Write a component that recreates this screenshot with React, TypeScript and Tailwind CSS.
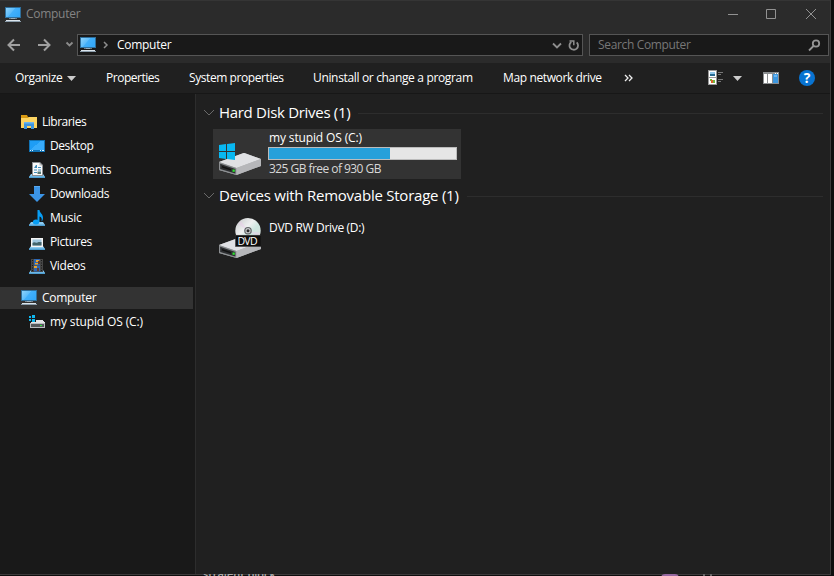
import type { ReactNode } from "react";

function Monitor({ className = "" }: { className?: string }) {
  return (
    <svg width="16" height="16" viewBox="0 0 16 16" className={`shrink-0 ${className}`} shapeRendering="crispEdges">
      <defs>
        <linearGradient id="scr" x1="0" y1="0" x2="1" y2="0.6">
          <stop offset="0" stopColor="#8fd3fb" />
          <stop offset="0.5" stopColor="#5cbcfb" />
          <stop offset="0.52" stopColor="#42b0fb" />
          <stop offset="1" stopColor="#35a8f8" />
        </linearGradient>
      </defs>
      <rect width="16" height="11" fill="#2f6f9c" />
      <rect x="1" y="1" width="14" height="9" fill="url(#scr)" />
      <rect x="6" y="11" width="4" height="1" fill="#7c93a3" />
      <rect x="4" y="11" width="8" height="1" fill="#a9bccb" opacity=".6" />
      <rect x="1" y="13" width="14" height="1" fill="#dce5ec" />
      <rect y="14" width="16" height="1" fill="#8b9dab" />
    </svg>
  );
}

function LibraryIcon() {
  return (
    <svg width="16" height="16" viewBox="0 0 16 16" className="shrink-0">
      <path d="M0 1h6l1 2h9v11H0z" fill="#d99a12" />
      <path d="M0 4h7l1-1h8v11H0z" fill="#fcd462" />
      <path d="M3 15V8h10v7h-3v-3H6v3z" fill="#3e95df" />
      <path d="M3 8h10v1.500H3z" fill="#6db6ee" />
    </svg>
  );
}

function DesktopIcon() {
  return (
    <svg width="16" height="16" viewBox="0 0 16 16" className="shrink-0" shapeRendering="crispEdges">
      <rect y="2" width="16" height="12" fill="#1173b5" />
      <rect x="1" y="3" width="14" height="9" fill="#1e9df5" />
      <path d="M1 12L12 3h3v9z" fill="#38acfb" />
      <path d="M1 12h1v1H1zM3 12h1v1H3zM11 12h1v1h-1zM13 12h2v1h-2z" fill="#d8f0ff" />
    </svg>
  );
}

function Tray() {
  return (
    <g>
      <path d="M2 12h12l2 3H0z" fill="#8bcbf2" />
      <path d="M0 14.500h16v1.500H0z" fill="#4f9fd2" />
    </g>
  );
}

function DocumentsIcon() {
  return (
    <svg width="16" height="16" viewBox="0 0 16 16" className="shrink-0">
      <Tray />
      <path d="M3 0h8l3 3v11H3z" fill="#8c9093" />
      <path d="M4 1h6.500L13 3.500V13H4z" fill="#fafafa" />
      <path d="M10.500 1v2.500H13" fill="#b9bcbe" />
      <path d="M5 6l2-3h1v3zM9 5h3v1H9zM5 7.500h3v1H5zM9 7.500h3v1H9zM5 10h3v1H5z" fill="#438fbb" />
      <path d="M8.500 9.500H12V12H8.500z" fill="#577b78" />
    </svg>
  );
}

function DownloadsIcon() {
  return (
    <svg width="16" height="16" viewBox="0 0 16 16" className="shrink-0">
      <path d="M5 0h6v8h5l-8 8-8-8h5z" fill="#3b94e6" />
      <path d="M5 0h6v1H5z" fill="#58a9ef" />
    </svg>
  );
}

function MusicIcon() {
  return (
    <svg width="16" height="16" viewBox="0 0 16 16" className="shrink-0">
      <Tray />
      <ellipse cx="7" cy="12" rx="3.200" ry="2.500" fill="#079ef5" />
      <path d="M8.500 12V0h2c0 3 4 4 3.500 8.500-.2 1.500-.8 2.500-1.500 3 .8-3-.2-4.500-2-5V12z" fill="#079ef5" />
    </svg>
  );
}

function PicturesIcon() {
  return (
    <svg width="16" height="16" viewBox="0 0 16 16" className="shrink-0">
      <Tray />
      <path d="M2 4h12v9H2z" fill="#f5f5f5" />
      <path d="M3.500 5.500h9v6h-9z" fill="#9fc6df" />
      <path d="M3.500 9c2-2 3 .5 5-.5s3 0 4-.5v3.500h-9z" fill="#42636b" />
    </svg>
  );
}

function VideosIcon() {
  return (
    <svg width="16" height="16" viewBox="0 0 16 16" className="shrink-0">
      <Tray />
      <path d="M2 1h12v13H2z" fill="#464646" />
      <path d="M3 2h1v1H3zM3 4.500h1v1H3zM3 7h1v1H3zM3 9.500h1v1H3zM3 12h1v1H3zM12 2h1v1h-1zM12 4.500h1v1h-1zM12 7h1v1h-1zM12 9.500h1v1h-1zM12 12h1v1h-1z" fill="#191919" />
      <path d="M5 1h6v6H5zM5 7.500h6v6H5z" fill="#2c67b5" />
      <path d="M7 2h3v2H7zM6 5h3v1.500H6zM5 8h3v2H5z" fill="#e6a32e" />
      <path d="M9 3h2v3H9zM8 10h2v3H8z" fill="#643b26" />
    </svg>
  );
}

function SmallDriveIcon() {
  return (
    <svg width="16" height="16" viewBox="0 0 16 16" className="shrink-0" shapeRendering="crispEdges">
      <path d="M0 2h2v2H0zM3 1h3v3H3zM0 5h2v2H0zM3 5h3v3H3z" fill="#10b8ef" />
      <path d="M7 6h7l2 3H1l2-1h4z" fill="#e2e3e5" />
      <path d="M1 9h15v5H1z" fill="#b9bcc0" />
      <path d="M2 10h13v3H2z" fill="#55585b" />
      <path d="M11 11h2v1h-2z" fill="#32e43f" />
    </svg>
  );
}

function DriveBody() {
  return (
    <g>
      <path d="M0 26L24 17.300q1-.4 2 0L42 23v7L17.500 39 0 34z" fill="#aeb0b2" />
      <path d="M0 26L24 17.300q1-.4 2 0L42 23 17.500 32z" fill="#e0e1e4" />
      <path d="M0 26l17.500 6v7L0 34z" fill="#8b8e91" />
      <path d="M1.200 27.800L16.300 33v4.500L1.200 33z" fill="#2c2e30" />
      <path d="M3 30l9 3v1.500L3 31.500z" fill="#111" />
      <path d="M17.500 32L42 23v7l-24.500 9z" fill="#b6b7ba" />
      <path d="M13.500 33.500h2.300v2.300h-2.300z" fill="#2fe02f" />
    </g>
  );
}

function WindowsDrive() {
  return (
    <svg width="42" height="42" viewBox="0 0 42 42" className="shrink-0">
      <DriveBody />
      <path d="M0 9l7-1v7H0zM8 7.900L16 7v8H8zM0 16h7v7l-7-1zM8 16h8v8l-8-1z" fill="#08b8f2" />
    </svg>
  );
}

function DvdDrive() {
  return (
    <svg width="42" height="42" viewBox="0 0 42 42" className="shrink-0">
      <defs>
        <linearGradient id="disc" x1="0" y1="0" x2="1" y2="1">
          <stop offset="0" stopColor="#c4c7c8" />
          <stop offset=".4" stopColor="#eef0f0" />
          <stop offset=".6" stopColor="#cce6df" />
          <stop offset="1" stopColor="#dadada" />
        </linearGradient>
      </defs>
      <g transform="translate(0 2)"><DriveBody /></g>
      <circle cx="29" cy="13.700" r="12.700" fill="url(#disc)" />
      <path d="M29 13.700L19 7l3-3zM29 13.700l10 6 2-4z" fill="#e9c9e9" opacity=".45" />
      <circle cx="29" cy="13.700" r="3.800" fill="#606466" />
      <circle cx="29" cy="13.700" r="2.600" fill="#c9cccd" />
      <circle cx="29" cy="13.700" r="1.500" fill="#292929" />
      <rect x="16.500" y="18.200" width="25.500" height="11.300" fill="#0d0d0d" stroke="#333" strokeWidth=".5" />
      <text x="18.500" y="27.800" fontSize="10.500" textLength="20" fill="#fff" fontFamily="Open Sans, sans-serif">DVD</text>
    </svg>
  );
}

function Chevron({ className = "" }: { className?: string }) {
  return (
    <svg width="12" height="8" viewBox="0 0 12 8" className={`shrink-0 ${className}`} fill="none" stroke="currentColor">
      <path d="M1 1l5 5 5-5" />
    </svg>
  );
}

function NavRow({ icon, label, child, spacing }: { icon: ReactNode; label: string; child?: boolean; spacing: string }) {
  return (
    <div className={`flex h-6 items-center gap-[5px] ${child ? "pl-[29px]" : "pl-[21px]"}`}>
      {icon}
      <span className={spacing}>{label}</span>
    </div>
  );
}

function Group({ title, spacing }: { title: string; spacing: string }) {
  return (
    <div className="flex h-6 items-center pr-[7px] pl-[7px] text-[15px] text-white">
      <Chevron className="mr-[4px] text-[#6a6a6a]" />
      <span className={`pb-[2px] ${spacing}`}>{title}</span>
      <div className="ml-[8px] h-px flex-1 bg-[#2d2d2d]" />
    </div>
  );
}

export default function App() {
  return (
    <div className="relative h-[576px] w-[834px] overflow-hidden bg-[#0e0e0e] font-['Open_Sans',sans-serif] text-[12px] leading-4 whitespace-nowrap text-white">
      <div className="flex h-[575px] w-[831px] flex-col border-r border-b border-[#3c3a3b] bg-[#2b2b2b]">
        <header className="flex h-[34px] shrink-0 items-start border-t border-[#353535] pl-[5px]">
          <Monitor className="mt-[6px]" />
          <span className="mt-[5px] ml-[5px] tracking-[-0.28px] text-[#848484]">Computer</span>
          <svg width="106" height="28" viewBox="0 0 106 28" className="ml-auto" fill="none" stroke="#929292">
            <path d="M4 13.500h10M42.500 8.500h9v9h-9zM82 8l10 10M92 8L82 18" />
          </svg>
        </header>

        <div className="flex h-[29px] shrink-0 items-start">
          <svg width="77" height="22" viewBox="0 0 77 22" fill="none" stroke="#a0a0a0" strokeWidth="2" className="shrink-0">
            <path d="M20 11H9M14 5.500L8.500 11l5.500 5.500M38 11h11M44 5.500l5.500 5.500-5.500 5.500" />
            <path d="M66.500 8.500l3 3 3-3" strokeWidth="1.800" stroke="#8c8c8c" />
          </svg>
          <div className="flex h-[22px] w-[506px] shrink-0 items-center border border-[#555] bg-[#191919] pl-[2px]">
            <Monitor />
            <svg width="6" height="10" viewBox="0 0 6 10" fill="none" stroke="#8c8c8c" strokeWidth="1.500" className="ml-[7px]">
              <path d="M1 2l3 3-3 3" />
            </svg>
            <span className="ml-[8px] tracking-[-0.28px]">Computer</span>
            <svg width="32" height="20" viewBox="0 0 32 20" fill="none" stroke="#8e8e8e" strokeWidth="1.800" className="ml-auto">
              <path d="M3 8.500l4 4 4-4" />
              <path d="M21.300 6.900A4.300 4.300 0 1 0 26.700 7.300" />
              <path d="M19.500 5.900h4.300v4.300" strokeWidth="1.500" />
            </svg>
          </div>
          <div className="ml-[6px] flex h-[22px] w-[240px] items-center border border-[#555] bg-[#191919] pr-[7px] pl-[8px] text-[#777]">
            <span className="tracking-[-0.34px]">Search Computer</span>
            <svg width="13" height="13" viewBox="0 0 13 13" fill="none" stroke="#969696" strokeWidth="1.800" className="ml-auto">
              <circle cx="8" cy="4.500" r="3.200" />
              <path d="M5.500 7L1 11.500" />
            </svg>
          </div>
        </div>

        <div className="flex h-[31px] shrink-0 items-center border-b border-[#171717] bg-[#202020] pl-[15px]">
          <span className="w-[52px] tracking-[-0.36px]">Organize</span>
          <svg width="9" height="5" viewBox="0 0 9 5"><path d="M0 0h9L4.500 5z" fill="#ccc" /></svg>
          <span className="ml-[30px] w-[83px] tracking-[-0.48px]">Properties</span>
          <span className="w-[124px] tracking-[-0.42px]">System properties</span>
          <span className="w-[190px] tracking-[-0.34px]">Uninstall or change a program</span>
          <span className="w-[121px] tracking-[-0.38px]">Map network drive</span>
          <svg width="10" height="8" viewBox="0 0 10 8" fill="none" stroke="#eee" strokeWidth="1.300">
            <path d="M1 1l3 3-3 3M5 1l3 3-3 3" />
          </svg>
          <svg width="34" height="16" viewBox="0 0 34 16" className="ml-[74px]">
            <path d="M0 0h9v15H0z" fill="#999" />
            <path d="M1 1h7v6H1zM1 8h7v6H1z" fill="#fff" />
            <path d="M2 2h5v2H2z" fill="#91c8ec" /><path d="M2 4h5v2H2z" fill="#286b91" />
            <path d="M2 9h2v2H2zM5 10h2v3H5z" fill="#72b63c" /><path d="M3 10h2v3H3z" fill="#db632c" />
            <path d="M10 2.500h5M10 4.500h3M10 9.500h5M10 11.500h3" stroke="#777" />
            <path d="M25 6h9l-4.500 5z" fill="#ccc" />
          </svg>
          <svg width="16" height="12" viewBox="0 0 16 12" className="ml-[21px]" shapeRendering="crispEdges">
            <path d="M0 0h16v12H0z" fill="#8b8e90" />
            <path d="M1 2h3v9H1zM5 2h4v9H5z" fill="#fff" />
            <path d="M10 2h5v9h-5z" fill="#3c97df" />
            <path d="M11 3h3v2h-3z" fill="#6db6ef" />
            <path d="M12 1h1v1h-1zM14 1h1v1h-1z" fill="#fff" />
          </svg>
          <div className="ml-[20px] flex size-4 items-center justify-center rounded-full bg-[#0873d1] text-[14px] font-bold">?</div>
        </div>

        <div className="flex min-h-0 flex-1">
          <nav className="w-[195px] shrink-0 bg-[#191919] pt-[16px]">
            <NavRow icon={<LibraryIcon />} label="Libraries" spacing="tracking-[-0.5px]" />
            <NavRow child icon={<DesktopIcon />} label="Desktop" spacing="tracking-[-0.42px]" />
            <NavRow child icon={<DocumentsIcon />} label="Documents" spacing="tracking-[-0.36px]" />
            <NavRow child icon={<DownloadsIcon />} label="Downloads" spacing="tracking-[-0.4px]" />
            <NavRow child icon={<MusicIcon />} label="Music" spacing="tracking-[-0.2px]" />
            <NavRow child icon={<PicturesIcon />} label="Pictures" spacing="tracking-[-0.38px]" />
            <NavRow child icon={<VideosIcon />} label="Videos" spacing="tracking-[-0.3px]" />
            <div className="mt-[9px] mb-px flex h-[22px] w-[193px] items-center gap-[5px] bg-[#333] pl-[21px]">
              <Monitor />
              <span className="tracking-[-0.28px]">Computer</span>
            </div>
            <NavRow child icon={<SmallDriveIcon />} label="my stupid OS (C:)" spacing="tracking-[-0.14px]" />
          </nav>
          <main className="min-w-0 flex-1 border-l border-[#2d2d2d] bg-[#202020] pt-[7px]">
            <Group title="Hard Disk Drives (1)" spacing="tracking-[-0.3px]" />
            <div className="mt-[4px] ml-[17px] flex h-[50px] w-[248px] bg-[#333] pl-[6px]">
              <div className="pt-[7px]"><WindowsDrive /></div>
              <div className="ml-[7px] w-[189px]">
                <div className="h-[18px] pt-px pl-px tracking-[-0.14px]">my stupid OS (C:)</div>
                <div className="h-[13px] border border-[#bcbcbc] bg-[#e6e6e6]">
                  <div className="h-full w-[121px] bg-[#26a0da]" />
                </div>
                <div className="pt-px pl-px tracking-[-0.55px] text-[#d8d8d8]">325 GB free of 930 GB</div>
              </div>
            </div>
            <div className="pt-[5px]"><Group title="Devices with Removable Storage (1)" spacing="tracking-[-0.24px]" /></div>
            <div className="flex pt-[9px] pl-[23px]">
              <DvdDrive />
              <span className="mt-[3px] ml-[8px] tracking-[-0.32px]">DVD RW Drive (D:)</span>
            </div>
          </main>
        </div>
      </div>

      {/* Content of the window behind, peeking out over the bottom border */}
      <div className="absolute top-[574px] left-0 flex h-[2px] w-[834px] items-start overflow-hidden">
        <span className="-mt-[8px] ml-[203px] w-[458px] text-[11px] font-semibold text-[#aaa]">straient block</span>
        <span className="h-[8px] w-[18px] shrink-0 rounded-t-[4px] bg-[#9668a0]" />
        <span className="ml-[24px] h-[2px] w-[2px] bg-[#666]" />
        <span className="ml-[5px] h-[2px] w-[2px] bg-[#666]" />
      </div>
    </div>
  );
}
